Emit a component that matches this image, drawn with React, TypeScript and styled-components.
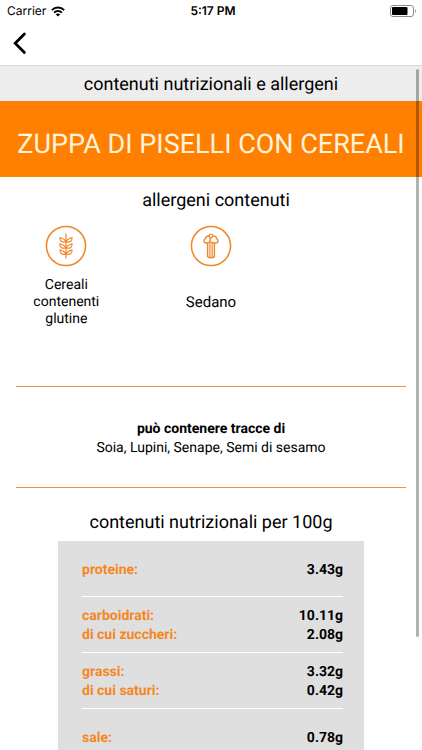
import React from "react";
import styled, { createGlobalStyle } from "styled-components";

const ORANGE = "#ff8000";
const LINE = "#f0923a";

const GlobalStyle = createGlobalStyle`
  *, *::before, *::after { box-sizing: border-box; }
  body {
    margin: 0;
    background: #fff;
    color: #000;
    font-family: Roboto, "Liberation Sans", sans-serif;
    text-rendering: geometricPrecision;
  }
`;

const Screen = styled.div`
  display: flex;
  flex-direction: column;
  height: 100vh;
  overflow: hidden;
  background: #fff;
`;

const StatusBar = styled.div`
  display: grid;
  grid-template-columns: 1fr auto 1fr;
  align-items: center;
  height: 22px;
  padding: 0 5px 0 7px;
  font-family: Inter, "Liberation Sans", sans-serif;
  font-size: 12px;
  line-height: 22px;
`;

const Carrier = styled.span`
  display: flex;
  align-items: center;
  gap: 5px;
`;

const Clock = styled.span`
  padding-left: 2px;
  font-weight: 600;
`;

const BatteryIcon = styled.svg`
  justify-self: end;
`;

const NavBar = styled.header`
  display: flex;
  align-items: center;
  flex: none;
  height: 44px;
  padding: 0 8px 2px;
  border-bottom: 1px solid #d6d6d6;
`;

const BackButton = styled.button`
  display: flex;
  padding: 4px;
  border: 0;
  background: none;
  color: #000;
  cursor: pointer;
`;

const Body = styled.div`
  position: relative;
  flex: 1;
  min-height: 0;
`;

const Scroller = styled.main`
  height: 100%;
  overflow-y: auto;
  scrollbar-width: none;
`;

const ScrollThumb = styled.div`
  position: absolute;
  top: 3px;
  right: 3px;
  width: 3px;
  height: 83%;
  border-radius: 2px;
  background: rgba(0, 0, 0, 0.3);
  pointer-events: none;
`;

const PageTitle = styled.p`
  margin: 0;
  padding: 7px 16px 4px;
  background: #ededed;
  font-size: 18px;
  line-height: 24px;
  text-align: center;
`;

const Banner = styled.h1`
  margin: 0;
  padding: 25px 16px 15px;
  background: ${ORANGE};
  color: #fff3dc;
  font-size: 27px;
  font-weight: 400;
  line-height: 36px;
  text-align: center;
`;

const Section = styled.section<{ $pad: string; $lined?: boolean }>`
  margin: 0 16px;
  padding: ${(p) => p.$pad};
  border-bottom: ${(p) => (p.$lined ? `1px solid ${LINE}` : "0")};
`;

const Heading = styled.h2<{ $indent?: boolean }>`
  margin: 0;
  padding-left: ${(p) => (p.$indent ? "10px" : "0")};
  font-size: 18px;
  font-weight: 400;
  line-height: 24px;
  text-align: center;
`;

const AllergenGrid = styled.ul`
  display: grid;
  grid-template-columns: repeat(3, 1fr);
  gap: 44px;
  margin: 12px 0 0;
  padding: 0;
  list-style: none;
`;

const Allergen = styled.li`
  display: flex;
  flex-direction: column;
  align-items: center;
  gap: 10px;
`;

const AllergenName = styled.span<{ $size: number }>`
  display: flex;
  align-items: center;
  flex: 1;
  padding: 0 12px;
  font-size: ${(p) => p.$size}px;
  line-height: 17px;
  text-align: center;
`;

const Traces = styled.p`
  margin: 0;
  font-size: 14px;
  line-height: 19px;
  text-align: center;
`;

const TracesTitle = styled.strong`
  display: block;
  font-weight: 700;
`;

const NutritionPanel = styled.div`
  margin: 6px 42px 24px;
  padding: 0 21px 0 24px;
  background: #dfdfdf;
`;

const NutritionTable = styled.table`
  width: 100%;
  border-collapse: collapse;
  font-size: 14px;
  font-weight: 700;
  line-height: 19px;
`;

const NutritionRow = styled.tr`
  height: 56px;
  &:first-child {
    height: 55px;
  }
  & + & {
    border-top: 1px solid #fff;
  }
`;

const NutrientLabel = styled.th`
  padding: 4px 0 0;
  color: #f5871f;
  text-align: left;
`;

const NutrientValue = styled.td`
  padding: 4px 0 0;
  text-align: right;
`;

const Line = styled.span`
  display: block;
`;

function WifiIcon() {
  return (
    <svg width="14" height="11" viewBox="0 0 14 11" fill="none" stroke="#000" strokeWidth="1.9" aria-hidden="true">
      <path d="M0.8 4.1C4.3 0.6 9.7 0.6 13.2 4.1" />
      <path d="M3.1 6.6C5.3 4.4 8.7 4.4 10.9 6.6" />
      <path d="M7 10.6 4.7 8.3C6 7.1 8 7.1 9.3 8.3Z" fill="#000" stroke="none" />
    </svg>
  );
}

function Battery() {
  return (
    <BatteryIcon width="27" height="12" viewBox="0 0 27 12" role="img" aria-label="battery">
      <rect x="0.5" y="0.5" width="23" height="11" rx="2.5" fill="none" stroke="#8c8c8c" />
      <rect x="2" y="2" width="15.5" height="8" rx="1" fill="#000" />
      <path d="M25 4.2C26.3 4.7 26.3 7.3 25 7.8Z" fill="#8c8c8c" />
    </BatteryIcon>
  );
}

function BackIcon() {
  return (
    <svg width="16" height="24" viewBox="0 0 16 24" fill="none" stroke="#000" strokeWidth="2.8" aria-hidden="true">
      <path d="M12.4 3 3.2 12.3 12.4 21.6" strokeLinecap="round" />
    </svg>
  );
}

function WheatIcon() {
  return (
    <svg width="42" height="42" viewBox="0 0 42 42" fill="none" stroke="#f0862a" strokeWidth="1.2" aria-hidden="true">
      <circle cx="21" cy="21" r="19.6" strokeWidth="1.5" />
      <path d="M21 8.5V33.5" />
      {[13, 19.2, 25.4].map((y) => (
        <g key={y} transform={`translate(21 ${y})`}>
          <path d="M0 3.8C-0.6 1.4-2.6 0.8-6 -0.4-6.2 3-4.6 4.4 0 3.8Z" />
          <path d="M0 3.8C0.6 1.4 2.6 0.8 6 -0.4 6.2 3 4.6 4.4 0 3.8Z" />
        </g>
      ))}
    </svg>
  );
}

function CeleryIcon() {
  return (
    <svg width="42" height="42" viewBox="0 0 42 42" fill="none" stroke="#f0862a" strokeWidth="1.4" aria-hidden="true">
      <circle cx="21" cy="21" r="19.6" strokeWidth="1.5" />
      <path d="M17.6 18V31.2C17.6 33.2 24.4 33.2 24.4 31.2V18" />
      <path d="M19.9 18V32.5M22.1 18V32.5" strokeWidth="1.2" />
      <path d="M19.2 11.2C16.8 10.6 15.6 12 15.6 13.6 13.4 14.2 13.2 18 16.4 18 18 18.2 19.4 17.6 20 16.4" />
      <path d="M22.8 11.2C25.2 10.6 26.4 12 26.4 13.6 28.6 14.2 28.8 18 25.6 18 23 18.2 20.6 17.4 20 15.6 19.6 14.2 20.4 13 21.4 12.6" />
      <circle cx="21" cy="10.8" r="1.8" strokeWidth="1.2" />
    </svg>
  );
}

const nutrients = [
  [["proteine:", "3.43g"]],
  [
    ["carboidrati:", "10.11g"],
    ["di cui zuccheri:", "2.08g"],
  ],
  [
    ["grassi:", "3.32g"],
    ["di cui saturi:", "0.42g"],
  ],
  [["sale:", "0.78g"]],
];

export default function App() {
  return (
    <Screen>
      <GlobalStyle />
      <StatusBar>
        <Carrier>
          Carrier
          <WifiIcon />
        </Carrier>
        <Clock>5:17 PM</Clock>
        <Battery />
      </StatusBar>
      <NavBar>
        <BackButton type="button" aria-label="Indietro">
          <BackIcon />
        </BackButton>
      </NavBar>
      <Body>
        <Scroller>
          <PageTitle>contenuti nutrizionali e allergeni</PageTitle>
          <Banner>ZUPPA DI PISELLI CON CEREALI</Banner>
          <Section $pad="12px 0 58px" $lined>
            <Heading $indent>allergeni contenuti</Heading>
            <AllergenGrid>
              <Allergen>
                <WheatIcon />
                <AllergenName $size={14}>Cereali contenenti glutine</AllergenName>
              </Allergen>
              <Allergen>
                <CeleryIcon />
                <AllergenName $size={15}>Sedano</AllergenName>
              </Allergen>
            </AllergenGrid>
          </Section>
          <Section $pad="33px 0 29px" $lined>
            <Traces>
              <TracesTitle>può contenere tracce di</TracesTitle>
              Soia, Lupini, Senape, Semi di sesamo
            </Traces>
          </Section>
          <Section $pad="23px 0 0">
            <Heading>contenuti nutrizionali per 100g</Heading>
            <NutritionPanel>
              <NutritionTable>
                <tbody>
                  {nutrients.map((group) => (
                    <NutritionRow key={group[0][0]}>
                      <NutrientLabel scope="row">
                        {group.map(([label]) => (
                          <Line key={label}>{label}</Line>
                        ))}
                      </NutrientLabel>
                      <NutrientValue>
                        {group.map(([label, value]) => (
                          <Line key={label}>{value}</Line>
                        ))}
                      </NutrientValue>
                    </NutritionRow>
                  ))}
                </tbody>
              </NutritionTable>
            </NutritionPanel>
          </Section>
        </Scroller>
        <ScrollThumb />
      </Body>
    </Screen>
  );
}
